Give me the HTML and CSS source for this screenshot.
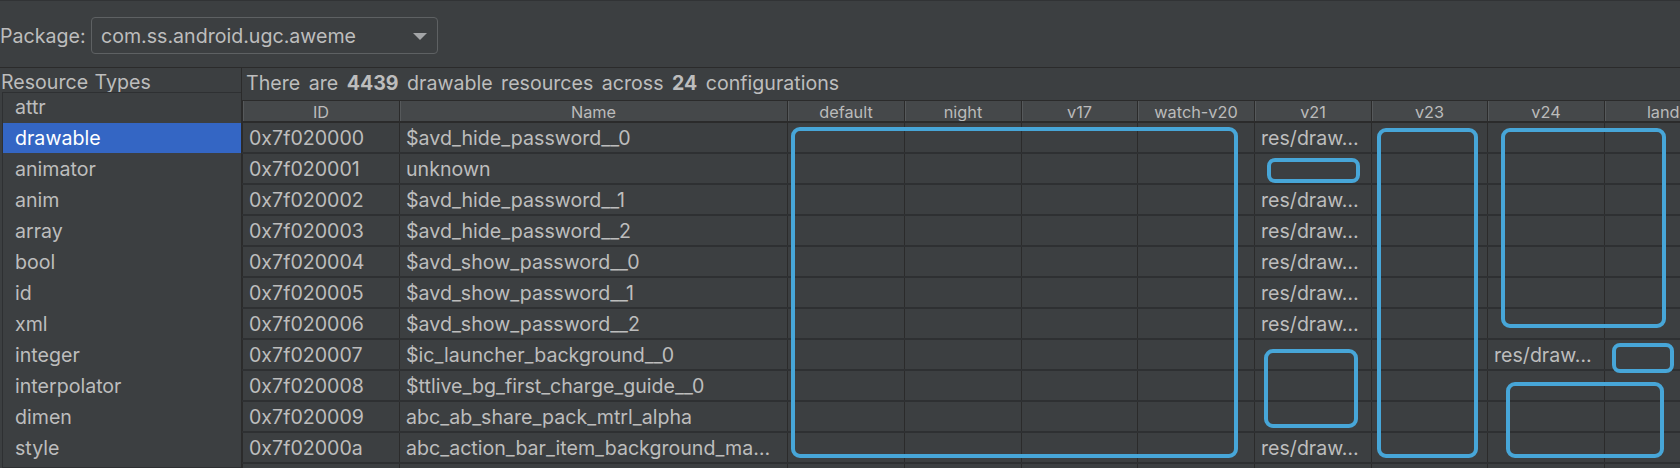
FILE: index.html
```html
<!DOCTYPE html>
<html>
<head>
<meta charset="utf-8">
<link rel="stylesheet" href="styles.css">
</head>
<body>
<div class="page">
  <div class="topbar">
    <span class="pkg-label">Package:</span>
    <div class="combo">
      <span class="combo-text">com.ss.android.ugc.aweme</span>
      <span class="combo-arrow"></span>
    </div>
  </div>
  <div class="main">
    <div class="types">
      <div class="types-title">Resource Types</div>
      <ul class="type-list">
        <li class="first">attr</li>
        <li class="selected">drawable</li>
        <li>animator</li>
        <li>anim</li>
        <li>array</li>
        <li>bool</li>
        <li>id</li>
        <li>xml</li>
        <li>integer</li>
        <li>interpolator</li>
        <li>dimen</li>
        <li>style</li>
      </ul>
    </div>
    <div class="content">
      <div class="summary">There are <b>4439</b> drawable resources across <b>24</b> configurations</div>
      <div class="table-wrap">
        <table class="res-table">
          <colgroup>
            <col style="width:157px"><col style="width:388px"><col style="width:117px"><col style="width:117px"><col style="width:116px"><col style="width:117px"><col style="width:117px"><col style="width:116px"><col style="width:117px"><col style="width:117px">
          </colgroup>
          <thead>
            <tr><th>ID</th><th>Name</th><th>default</th><th>night</th><th>v17</th><th>watch-v20</th><th>v21</th><th>v23</th><th>v24</th><th>land</th></tr>
          </thead>
          <tbody>
            <tr><td>0x7f020000</td><td>$avd_hide_password__0</td><td></td><td></td><td></td><td></td><td>res/draw…</td><td></td><td></td><td></td></tr>
            <tr><td>0x7f020001</td><td>unknown</td><td></td><td></td><td></td><td></td><td></td><td></td><td></td><td></td></tr>
            <tr><td>0x7f020002</td><td>$avd_hide_password__1</td><td></td><td></td><td></td><td></td><td>res/draw…</td><td></td><td></td><td></td></tr>
            <tr><td>0x7f020003</td><td>$avd_hide_password__2</td><td></td><td></td><td></td><td></td><td>res/draw…</td><td></td><td></td><td></td></tr>
            <tr><td>0x7f020004</td><td>$avd_show_password__0</td><td></td><td></td><td></td><td></td><td>res/draw…</td><td></td><td></td><td></td></tr>
            <tr><td>0x7f020005</td><td>$avd_show_password__1</td><td></td><td></td><td></td><td></td><td>res/draw…</td><td></td><td></td><td></td></tr>
            <tr><td>0x7f020006</td><td>$avd_show_password__2</td><td></td><td></td><td></td><td></td><td>res/draw…</td><td></td><td></td><td></td></tr>
            <tr><td>0x7f020007</td><td>$ic_launcher_background__0</td><td></td><td></td><td></td><td></td><td></td><td></td><td>res/draw…</td><td></td></tr>
            <tr><td>0x7f020008</td><td>$ttlive_bg_first_charge_guide__0</td><td></td><td></td><td></td><td></td><td></td><td></td><td></td><td></td></tr>
            <tr><td>0x7f020009</td><td>abc_ab_share_pack_mtrl_alpha</td><td></td><td></td><td></td><td></td><td></td><td></td><td></td><td></td></tr>
            <tr><td>0x7f02000a</td><td>abc_action_bar_item_background_ma…</td><td></td><td></td><td></td><td></td><td>res/draw…</td><td></td><td></td><td></td></tr>
            <tr><td></td><td></td><td></td><td></td><td></td><td></td><td></td><td></td><td></td><td></td></tr>
          </tbody>
        </table>
      </div>
    </div>
  </div>
  <div class="mark m1"></div>
  <div class="mark m2"></div>
  <div class="mark m3"></div>
  <div class="mark m4"></div>
  <div class="mark m5"></div>
  <div class="mark m6"></div>
  <div class="mark m7"></div>
</div>
</body>
</html>
```

FILE: styles.css
```css
html, body {
  margin: 0;
  padding: 0;
  background: #3c3f41;
  overflow: hidden;
}
body {
  width: 1680px;
  height: 468px;
}
.page {
  position: relative;
  width: 1680px;
  height: 468px;
  overflow: hidden;
  font-family: "Inter", "Liberation Sans", sans-serif;
  color: #bdbdbd;
  font-size: 19.6px;
  display: flex;
  flex-direction: column;
  border-top: 1px solid #313335;
  box-sizing: border-box;
}
.topbar {
  height: 67px;
  display: flex;
  align-items: center;
  border-bottom: 1px solid #2b2b2b;
  box-sizing: border-box;
  padding-top: 3px;
}
.pkg-label {
  width: 91px;
  white-space: nowrap;
}
.combo {
  width: 347px;
  height: 37px;
  border: 1px solid #5e6163;
  border-radius: 4px;
  box-sizing: border-box;
  display: flex;
  align-items: center;
  justify-content: space-between;
  padding: 1px 10px 0 9px;
}
.combo-arrow {
  width: 0;
  height: 0;
  border-left: 7px solid transparent;
  border-right: 7px solid transparent;
  border-top: 7px solid #a3a5a7;
}
.main {
  flex: 1;
  display: flex;
  min-height: 0;
}
.types {
  width: 242px;
  border-right: 1px solid #2b2b2b;
  box-sizing: border-box;
  display: flex;
  flex-direction: column;
}
.types-title {
  height: 24px;
  line-height: 20px;
  padding-left: 1px;
  padding-top: 4px;
  box-sizing: border-box;
  white-space: nowrap;
  word-spacing: 1px;
}
.type-list {
  list-style: none;
  margin: 0 0 0 2px;
  padding: 0;
  border: 1px solid #2e3032;
  border-right: none;
  flex: 1;
}
.type-list li {
  height: 31px;
  line-height: 33px;
  padding-left: 12px;
}
.type-list li.first {
  height: 29px;
  line-height: 29px;
}
.type-list li.selected {
  background: #3466c4;
  color: #ffffff;
  margin-top: 1px;
  height: 30px;
  line-height: 31px;
}
.content {
  flex: 1;
  min-width: 0;
  display: flex;
  flex-direction: column;
}
.summary {
  height: 32px;
  line-height: 22px;
  padding-left: 4px;
  padding-top: 4px;
  box-sizing: border-box;
  white-space: nowrap;
  word-spacing: 3px;
}
.summary b {
  font-weight: 700;
}
.table-wrap {
  flex: 1;
  overflow: hidden;
}
.res-table {
  table-layout: fixed;
  border-collapse: collapse;
  width: 1394px;
}
.res-table th {
  height: 20px;
  padding: 2px 0 0 0;
  font-size: 16.3px;
  font-weight: 400;
  color: #bbbbbb;
  text-align: center;
  background-color: #45484a;
  background-image: radial-gradient(circle, rgba(255,255,255,0.06) 0.6px, transparent 0.7px);
  background-size: 2px 2px;
  border-left: 1px solid #2b2b2b;
  border-top: 1px solid #2b2b2b;
  border-bottom: 2px solid #2b2b2b;
  box-shadow: inset 1px 0 0 #56595b;
  line-height: 18px;
  white-space: nowrap;
  overflow: hidden;
  box-sizing: border-box;
}
.res-table td {
  height: 29px;
  padding: 1px 0 0 6px;
  border-left: 1px solid #2b2b2b;
  border-bottom: 2px solid #2e3032;
  white-space: nowrap;
  overflow: hidden;
  line-height: 28px;
  box-sizing: border-box;
}
.mark {
  position: absolute;
  box-sizing: border-box;
  border: 4px solid #47a6d8;
  border-radius: 9px;
}
.m1 { left: 791px; top: 126px; width: 447px; height: 331px; }
.m2 { left: 1267px; top: 157px; width: 93px; height: 25px; border-radius: 8px; }
.m3 { left: 1377px; top: 127px; width: 101px; height: 330px; }
.m4 { left: 1501px; top: 127px; width: 165px; height: 200px; }
.m5 { left: 1264px; top: 348px; width: 94px; height: 79px; }
.m6 { left: 1612px; top: 342px; width: 62px; height: 30px; border-radius: 8px; }
.m7 { left: 1506px; top: 381px; width: 158px; height: 76px; }
```
